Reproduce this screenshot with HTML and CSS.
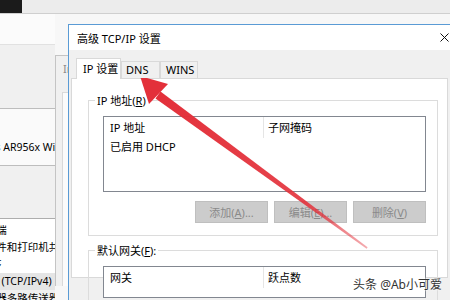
FILE: index.html
```html
<!DOCTYPE html>
<html lang="zh-CN">
<head>
    <meta charset="UTF-8">
    <meta name="viewport" content="width=device-width, initial-scale=1.0">
    <title>高级 TCP/IP 设置</title>
    <link rel="stylesheet" href="styles.css">
</head>
<body>
    <div class="topbar"><div class="topbar-dark"></div></div>

    <div class="desk">
        <!-- Ethernet properties window (behind) -->
        <div class="back-win">
            <div class="back-head"></div>
            <div class="back-body">
                <div class="adapter"><span class="adapter-name">Qualcomm Atheros AR956x Wireless Network Adapter</span></div>
                <ul class="items">
                    <li>Microsoft 网络客户端</li>
                    <li>Microsoft 网络的文件和打印机共享</li>
                    <li>QoS 数据包计划程序</li>
                    <li class="picked">Internet 协议版本 4 (TCP/IPv4)</li>
                    <li>Microsoft 网络适配器多路传送器协议</li>
                </ul>
            </div>
        </div>

        <!-- IPv4 properties window (behind) -->
        <div class="mid-win">
            <div class="mid-title">Internet 协议版本 4 (TCP/IPv4) 属性</div>
            <div class="mid-panel"></div>
        </div>

        <!-- Advanced TCP/IP settings dialog -->
        <div class="dialog">
            <div class="titlebar">
                <span>高级 TCP/IP 设置</span>
                <svg class="close" width="9" height="9" viewBox="0 0 9 9">
                    <path d="M0.5 0.5 L8.5 8.5 M8.5 0.5 L0.5 8.5" stroke="#111" stroke-width="1" fill="none"/>
                </svg>
            </div>
            <div class="dialog-body">
                <div class="tabs">
                    <div class="tab tab-ip active">IP 设置</div>
                    <div class="tab tab-dns">DNS</div>
                    <div class="tab tab-wins">WINS</div>
                </div>
                <div class="panel">
                    <fieldset class="group">
                        <legend>IP 地址(<u>R</u>)</legend>
                        <div class="group-inner">
                            <div class="listbox">
                                <div class="lb-head"><span class="col1">IP 地址</span><span class="col2">子网掩码</span></div>
                                <div class="lb-row">已启用 DHCP</div>
                            </div>
                            <div class="buttons">
                                <button>添加(<u>A</u>)...</button>
                                <button>编辑(<u>E</u>)...</button>
                                <button>删除(<u>V</u>)</button>
                            </div>
                        </div>
                    </fieldset>
                    <fieldset class="group gateway">
                        <legend>默认网关(<u>F</u>):</legend>
                        <div class="group-inner">
                            <div class="listbox tall">
                                <div class="lb-head"><span class="col1">网关</span><span class="col2">跃点数</span></div>
                            </div>
                        </div>
                    </fieldset>
                </div>
            </div>
        </div>
    </div>

    <!-- red arrow pointing at the DNS tab -->
    <svg class="arrow" width="450" height="300" viewBox="0 0 450 300">
        <defs>
            <linearGradient id="fade" x1="158" y1="95" x2="367" y2="248" gradientUnits="userSpaceOnUse">
                <stop offset="0" stop-color="#e3303a"/>
                <stop offset="0.7" stop-color="#e3303a" stop-opacity="0.9"/>
                <stop offset="1" stop-color="#e3303a" stop-opacity="0.4"/>
            </linearGradient>
        </defs>
        <polygon points="160.5,91.5 367.6,247.3 366.6,248.7 155.5,98.5" fill="url(#fade)"/>
        <polygon points="140,76 168,84 149,104" fill="#e3303a"/>
    </svg>

    <div class="watermark">头条 @Ab小可爱</div>
</body>
</html>
```

FILE: styles.css
```css
body {
    margin: 0;
    width: 450px;
    height: 300px;
    overflow: hidden;
    position: relative;
    font-family: "Noto Sans", "Noto Sans CJK SC", sans-serif;
    font-size: 11px;
    color: #000;
    background: #f7f7f7;
}
.topbar {
    height: 13px;
    background: #ececec;
    border-bottom: 1px solid #cfcfcf;
}
.topbar-dark {
    width: 22px;
    height: 13px;
    background: #1b1b1b;
}
.desk {
    display: flex;
    align-items: flex-start;
    height: 286px;
    overflow: hidden;
}

/* back window */
.back-win {
    flex: none;
    width: 55px;
    height: 100%;
    overflow: hidden;
    background: #f0f0f0;
    font-size: 10.5px;
}
.back-head {
    height: 30px;
    background: #fbfbfb;
    border-bottom: 1px solid #e1e1e1;
}
.adapter {
    margin-top: 63px;
    height: 25px;
    padding-top: 31px;
    border-top: 1px solid #bdbdbd;
    border-bottom: 1px solid #bdbdbd;
    background: #fafafa;
    line-height: 14px;
}
.adapter-name {
    display: block;
    white-space: nowrap;
    margin-left: -95px;
}
.items {
    list-style: none;
    margin: 52px 0 0;
    padding: 3px 0 0;
    height: 64px;
    border-top: 1px solid #adadad;
    background: #fff;
}
.items li {
    height: 17px;
    line-height: 17px;
    white-space: nowrap;
    margin-left: -95px;
}
.items li.picked {
    background: #e5e5e5;
}

/* middle window */
.mid-win {
    flex: none;
    box-sizing: border-box;
    width: 13px;
    height: 231px;
    margin-top: 41px;
    overflow: hidden;
    background: #f0f0f0;
    border-left: 1px solid #c4c4c4;
    border-top: 1px solid #c4c4c4;
}
.mid-title {
    margin-top: 6px;
    padding-left: 7px;
    line-height: 14px;
    white-space: nowrap;
    color: #8a8a8a;
}
.mid-panel {
    margin: 16px 0 0 6px;
    height: 200px;
    background: #fbfbfb;
    border-left: 1px solid #d9d9d9;
    border-top: 1px solid #d9d9d9;
}

/* dialog */
.dialog {
    flex: 1;
    min-width: 0;
    height: 276px;
    margin-top: 10px;
    overflow: hidden;
    background: #f0f0f0;
    border-left: 1px solid #5a9bd5;
    border-top: 1px solid #5a9bd5;
}
.titlebar {
    display: flex;
    align-items: center;
    height: 25px;
    padding-left: 8px;
    background: #fff;
}
.close {
    margin-left: auto;
    margin-right: 1px;
}
.dialog-body {
    padding: 8px 2px 0;
}
.tabs {
    display: flex;
    align-items: flex-end;
    height: 20px;
    padding-left: 5px;
    position: relative;
    z-index: 1;
}
.tab {
    box-sizing: border-box;
    height: 17px;
    line-height: 16px;
    padding-left: 4px;
    border: 1px solid #d9d9d9;
    border-bottom: none;
    background: #f0f0f0;
    white-space: nowrap;
}
.tab.active {
    height: 21px;
    line-height: 20px;
    margin-bottom: -1px;
    padding-left: 6px;
    background: #fff;
}
.tab-ip { width: 45px; }
.tab-dns { width: 39px; }
.tab-wins { width: 38px; padding-left: 5px; }
.panel {
    box-sizing: border-box;
    width: 377px;
    height: 200px;
    padding: 15px 9px 0 16px;
    background: #fff;
    border: 1px solid #d9d9d9;
}
.group {
    margin: 0;
    min-width: 0;
    padding: 0 11px 12px 6px;
    border: 1px solid #dcdcdc;
}
.group legend {
    padding: 0 2px;
    line-height: 13px;
}
.gateway {
    margin-top: 8px;
}
.group-inner {
    margin-left: 8px;
    padding-top: 9px;
}
.listbox {
    height: 74px;
    background: #fff;
    border: 1px solid #828790;
}
.listbox.tall {
    height: 30px;
}
.lb-head {
    display: flex;
    height: 21px;
    line-height: 21px;
}
.col1 {
    box-sizing: border-box;
    width: 160px;
    padding-left: 6px;
    border-right: 1px solid #e5e5e5;
}
.col2 {
    padding-left: 4px;
}
.lb-row {
    padding-left: 6px;
    line-height: 18px;
}
.buttons {
    display: flex;
    justify-content: flex-end;
    gap: 6px;
    margin-top: 9px;
}
.buttons button {
    width: 73px;
    height: 22px;
    padding: 0;
    font: inherit;
    color: #8a8a8a;
    background: #cccccc;
    border: 1px solid #bfbfbf;
}

/* overlays */
.arrow {
    position: absolute;
    left: 0;
    top: 0;
    pointer-events: none;
}
.watermark {
    position: absolute;
    right: 8px;
    bottom: 8px;
    font-size: 12px;
    line-height: 14px;
    color: #333;
    text-shadow: 0 0 2px #fff, 0 0 2px #fff;
}
```
